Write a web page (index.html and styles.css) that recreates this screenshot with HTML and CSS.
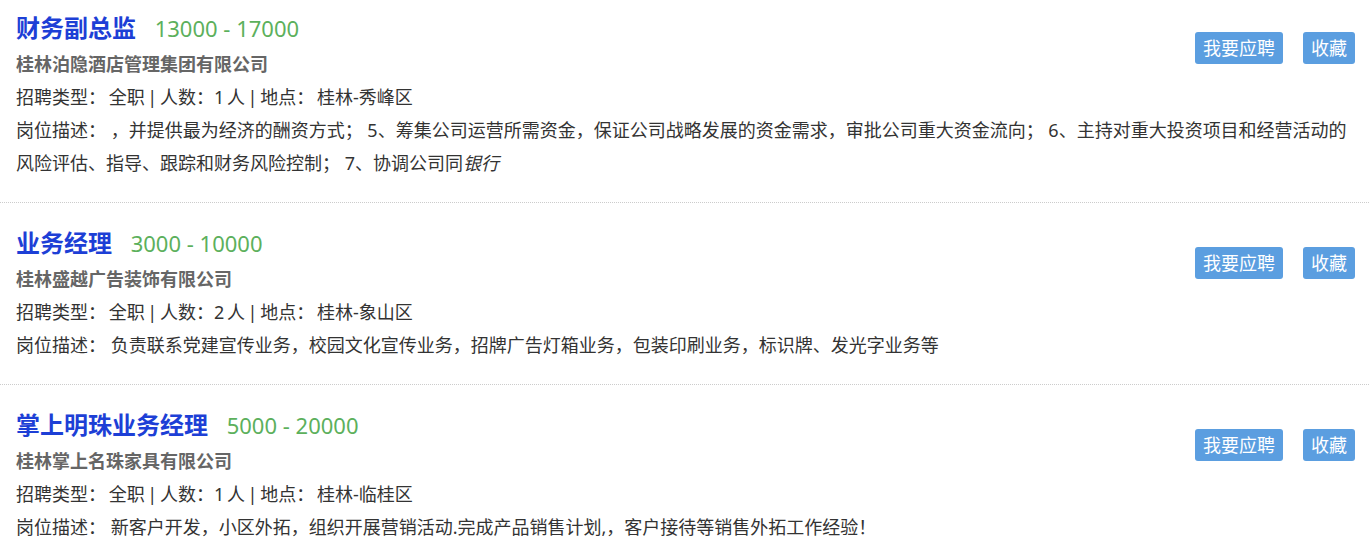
FILE: index.html
```html
<!DOCTYPE html>
<html lang="zh-CN">
<head>
  <meta charset="UTF-8" />
  <title>招聘信息</title>
  <link rel="stylesheet" href="styles.css">
</head>
<body>

  <div class="job-list">
    <!-- Job 1 -->
    <div class="job-item">
      <div class="job-head">
        <span class="job-title">财务副总监</span>
        <span class="job-salary">13000 - 17000</span>
      </div>
      <div class="job-company">桂林泊隐酒店管理集团有限公司</div>
      <div class="job-actions">
        <a class="btn" href="#">我要应聘</a>
        <a class="btn" href="#">收藏</a>
      </div>
      <div class="job-meta">招聘类型： 全职 | 人数：1 人 | 地点： 桂林-秀峰区</div>
      <div class="job-desc">岗位描述： ，并提供最为经济的酬资方式； 5、筹集公司运营所需资金，保证公司战略发展的资金需求，审批公司重大资金流向； 6、主持对重大投资项目和经营活动的风险评估、指导、跟踪和财务风险控制； 7、协调公司同<i>银行</i></div>
    </div>

    <!-- Job 2 -->
    <div class="job-item">
      <div class="job-head">
        <span class="job-title">业务经理</span>
        <span class="job-salary">3000 - 10000</span>
      </div>
      <div class="job-company">桂林盛越广告装饰有限公司</div>
      <div class="job-actions">
        <a class="btn" href="#">我要应聘</a>
        <a class="btn" href="#">收藏</a>
      </div>
      <div class="job-meta">招聘类型： 全职 | 人数：2 人 | 地点： 桂林-象山区</div>
      <div class="job-desc">岗位描述： 负责联系党建宣传业务，校园文化宣传业务，招牌广告灯箱业务，包装印刷业务，标识牌、发光字业务等</div>
    </div>

    <!-- Job 3 -->
    <div class="job-item">
      <div class="job-head">
        <span class="job-title">掌上明珠业务经理</span>
        <span class="job-salary">5000 - 20000</span>
      </div>
      <div class="job-company">桂林掌上名珠家具有限公司</div>
      <div class="job-actions">
        <a class="btn" href="#">我要应聘</a>
        <a class="btn" href="#">收藏</a>
      </div>
      <div class="job-meta">招聘类型： 全职 | 人数：1 人 | 地点： 桂林-临桂区</div>
      <div class="job-desc">岗位描述： 新客户开发，小区外拓，组织开展营销活动.完成产品销售计划,，客户接待等销售外拓工作经验！</div>
    </div>
  </div>

</body>
</html>
```

FILE: styles.css
```css
/* === Body === */
body {
  margin: 0;
  background: #ffffff;
  font-family: "Noto Sans", "Noto Sans CJK SC", sans-serif;
  color: #333333;
  font-size: 18px;
}

/* === List === */
.job-item {
  display: grid;
  grid-template-columns: 1fr auto;
  padding: 22px 14px 22px 16px;
  border-bottom: 1px dotted #cccccc;
  line-height: 33px;
}

.job-item:first-child {
  padding-top: 10px;
}

.job-item:last-child {
  border-bottom: none;
}

/* === Title row === */
.job-head {
  line-height: 36px;
}

.job-title {
  color: #1d3fd6;
  font-size: 24px;
  font-weight: 700;
  margin-right: 14px;
}

.job-salary {
  color: #5cb05c;
  font-size: 22px;
}

.job-company {
  grid-column: 1;
  color: #666666;
  font-weight: 700;
}

/* === Buttons === */
.job-actions {
  grid-column: 2;
  grid-row: 1 / span 2;
  display: flex;
  gap: 20px;
  margin-top: 22px;
  align-self: start;
}

.btn {
  display: block;
  background: #5b9ee0;
  color: #ffffff;
  text-decoration: none;
  font-size: 18px;
  line-height: 32px;
  padding: 0 8px;
  border-radius: 3px;
}

/* === Details === */
.job-meta,
.job-desc {
  grid-column: 1 / span 2;
}

.job-meta {
  word-spacing: -2px;
}
```
